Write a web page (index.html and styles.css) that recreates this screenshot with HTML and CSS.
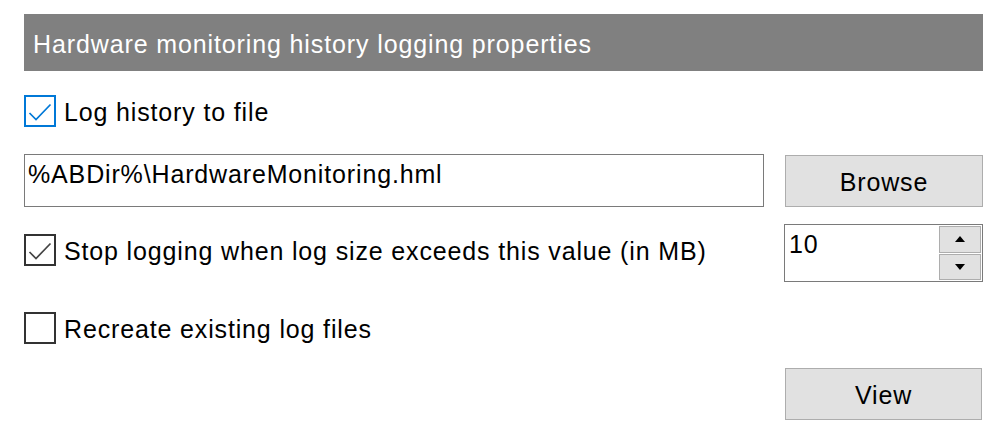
FILE: index.html
```html
<!DOCTYPE html>
<html>
<head>
<meta charset="utf-8">
<link rel="stylesheet" href="styles.css">
</head>
<body>
<div class="panel">
  <div class="header">Hardware monitoring history logging properties</div>

  <div class="check-row row-log">
    <span class="box box-focus">
      <svg width="28" height="28" viewBox="0 0 28 28"><path d="M3.5 16 L10 22.5 L24.5 7.5" fill="none" stroke="#0078d7" stroke-width="1.7"/></svg>
    </span>
    <span class="label">Log history to file</span>
  </div>

  <div class="row row-path">
    <div class="textbox">%ABDir%\HardwareMonitoring.hml</div>
    <div class="button btn-browse">Browse</div>
  </div>

  <div class="row row-stop">
    <div class="check-row stop-check">
      <span class="box">
        <svg width="28" height="28" viewBox="0 0 28 28"><path d="M3.5 16 L10 22.5 L24.5 7.5" fill="none" stroke="#444" stroke-width="1.7"/></svg>
      </span>
      <span class="label">Stop logging when log size exceeds this value (in MB)</span>
    </div>
    <div class="spinner">
      <div class="spin-value">10</div>
      <div class="spin-btns">
        <div class="spin-btn"><svg width="10" height="6" viewBox="0 0 10 6"><path d="M0 6 L5 0 L10 6 Z" fill="#000"/></svg></div>
        <div class="spin-btn"><svg width="10" height="6" viewBox="0 0 10 6"><path d="M0 0 L5 6 L10 0 Z" fill="#000"/></svg></div>
      </div>
    </div>
  </div>

  <div class="check-row row-recreate">
    <span class="box"></span>
    <span class="label">Recreate existing log files</span>
  </div>

  <div class="row row-view">
    <div class="button btn-view">View</div>
  </div>
</div>
</body>
</html>
```
FILE: styles.css
```css
html, body {
  margin: 0;
  padding: 0;
  background: #fff;
}
body {
  font-family: "Liberation Sans", Arial, sans-serif;
  color: #000;
}
.panel {
  width: 959px;
  padding: 14px 0 0 24px;
}
.header {
  height: 57px;
  box-sizing: border-box;
  background: #808080;
  color: #fff;
  font-size: 25px;
  letter-spacing: 0.88px;
  padding: 3px 0 0 9px;
  display: flex;
  align-items: center;
}
.check-row {
  display: flex;
  align-items: center;
  height: 32px;
}
.box {
  width: 32px;
  height: 32px;
  box-sizing: border-box;
  border: 2px solid #333;
  flex: none;
  display: flex;
  align-items: center;
  justify-content: center;
}
.box-focus {
  border-color: #0078d7;
}
.label {
  margin-left: 8px;
  padding-top: 2px;
  font-size: 25px;
  letter-spacing: 0.85px;
}
.row-log {
  margin-top: 24px;
}
.row {
  display: flex;
}
.row-path {
  margin-top: 27px;
  align-items: flex-start;
}
.textbox {
  width: 740px;
  height: 53px;
  box-sizing: border-box;
  border: 1px solid #7a7a7a;
  font-size: 25px;
  letter-spacing: 0.85px;
  padding: 5px 0 0 3px;
}
.button {
  background: #e1e1e1;
  border: 1px solid #adadad;
  box-sizing: border-box;
  font-size: 25px;
  letter-spacing: 0.85px;
  padding-top: 2px;
  display: flex;
  align-items: center;
  justify-content: center;
  width: 198px;
  height: 52px;
}
.btn-browse {
  margin: 1px 0 0 21px;
}
.row-stop {
  margin-top: 17px;
  justify-content: space-between;
  align-items: flex-start;
}
.stop-check {
  margin-top: 10px;
}
.spinner {
  width: 199px;
  height: 58px;
  box-sizing: border-box;
  border: 1px solid #7a7a7a;
  display: flex;
}
.spin-value {
  flex: 1;
  font-size: 25px;
  letter-spacing: 0.85px;
  padding: 5px 0 0 4px;
}
.spin-btns {
  width: 42px;
  padding: 1px 1px 1px 0;
  display: flex;
  flex-direction: column;
  gap: 1px;
}
.spin-btn {
  flex: 1;
  background: #e1e1e1;
  border: 1px solid #adadad;
  display: flex;
  align-items: center;
  justify-content: center;
}
.row-recreate {
  margin-top: 30px;
}
.row-view {
  margin-top: 24px;
  justify-content: flex-end;
}
.btn-view {
  width: 197px;
  margin-right: 1px;
}
```
